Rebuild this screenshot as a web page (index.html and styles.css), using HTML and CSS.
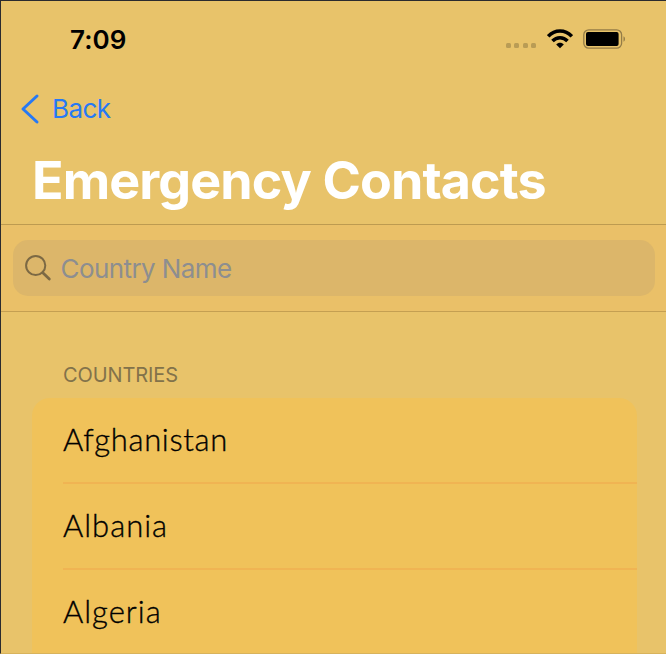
FILE: index.html
```html
<!DOCTYPE html>
<html lang="en">
<head>
<meta charset="utf-8">
<title>Emergency Contacts</title>
<link rel="stylesheet" href="styles.css">
</head>
<body>
<main class="screen">
  <header class="status">
    <span class="time">7:09</span>
    <div class="indicators">
      <div class="signal"><i></i><i></i><i></i><i></i></div>
      <svg class="wifi" width="26" height="20" viewBox="0 0 26 20" fill="none" stroke="#000" stroke-width="3.5">
        <path d="M1.2 7.3C7.8.2 18.200.2 24.800 7.300"/>
        <path d="M5.500 12C9.700 7.600 16.300 7.600 20.500 12"/>
        <path d="M13 19.200L9.200 15.400C11.200 13.300 14.800 13.300 16.800 15.400Z" fill="#000" stroke="none"/>
      </svg>
      <svg class="battery" width="43" height="20" viewBox="0 0 43 20">
        <rect x=".8" y=".8" width="37.800" height="18.400" rx="5" fill="none" stroke="#947c47" stroke-width="1.300"/>
        <rect x="3" y="3" width="32.600" height="14" rx="2"/>
        <path d="M40.500 7.300Q42 8 42 10T40.500 12.700Z" fill="#947c47"/>
      </svg>
    </div>
  </header>
  <nav class="nav">
    <svg width="20" height="32" viewBox="0 0 20 32" fill="none" stroke="#2679f5" stroke-width="3" stroke-linecap="round" stroke-linejoin="round"><path d="M17 3L3 16L17 29"/></svg>
    <span class="back">Back</span>
  </nav>
  <h1 class="title">Emergency Contacts</h1>
  <section class="searchbar">
    <div class="field">
      <svg width="28" height="28" viewBox="0 0 28 28" fill="none" stroke="#7c6944" stroke-width="2"><circle cx="11.700" cy="11.500" r="9.600"/><path d="M18.800 18.800L25.300 25" stroke-width="2.800" stroke-linecap="round"/></svg>
      <span class="placeholder">Country Name</span>
    </div>
  </section>
  <section class="list">
    <h2 class="label">COUNTRIES</h2>
    <ul class="card">
      <li>Afghanistan</li>
      <li class="wide">Albania</li>
      <li class="wide">Algeria</li>
    </ul>
  </section>
</main>
</body>
</html>
```
FILE: styles.css
```css
* { box-sizing: border-box; }
body { margin: 0; }
.screen {
  width: 666px;
  height: 654px;
  overflow: hidden;
  display: flex;
  flex-direction: column;
  background: #e8c36a;
  border-left: 1px solid #2b2b2e;
  border-top: 1px solid #2b2b2e;
  border-bottom: 1px solid #d8b35c;
  font-family: Inter, "Liberation Sans", sans-serif;
  white-space: nowrap;
}
.status {
  flex: none;
  height: 76px;
  padding: 0 40px 0 69px;
  display: flex;
  align-items: center;
  justify-content: space-between;
}
.time { font-size: 26px; font-weight: 600; letter-spacing: .1px; }
.indicators { display: flex; align-items: center; }
.signal { display: flex; gap: 3.500px; padding-top: 13px; margin-right: 11px; }
.signal i { width: 5px; height: 5px; border-radius: 1.500px; background: #b99c55; }
.battery { margin-left: 10px; }
.nav {
  flex: none;
  height: 64px;
  padding: 0 0 1px 19px;
  display: flex;
  align-items: center;
  color: #2679f5;
}
.back { margin-left: 12px; font-size: 26px; letter-spacing: -.6px; }
.title {
  flex: none;
  height: 84px;
  margin: 0;
  padding: 9px 0 0 31px;
  border-bottom: 1px solid #bd9b50;
  color: #fff;
  font-size: 52px;
  line-height: 62px;
  font-weight: 700;
  letter-spacing: -.9px;
}
.searchbar {
  flex: none;
  height: 87px;
  padding: 15px 11px 15px 12px;
  background: #eac068;
  border-bottom: 1px solid #c49f52;
}
.field {
  height: 56px;
  padding-left: 11px;
  border-radius: 15px;
  background: #dcb66a;
  display: flex;
  align-items: center;
}
.placeholder { margin-left: 8.500px; font-size: 26px; letter-spacing: -.58px; color: #8d8e90; }
.list { flex: 1; padding: 49px 29px 0 31px; }
.label {
  height: 37px;
  margin: 0;
  padding: 2px 0 0 31px;
  font-size: 20px;
  line-height: 24px;
  font-weight: 400;
  letter-spacing: -.1px;
  color: #82724a;
}
.card {
  list-style: none;
  margin: 0;
  padding: 0 0 0 31px;
  height: 260px;
  background: #f0c25a;
  border-radius: 18px 18px 0 0;
}
.card li {
  height: 86px;
  border-bottom: 2px solid #f0b453;
  font-family: Lato, "Liberation Sans", sans-serif;
  font-size: 31px;
  line-height: 83px;
  font-weight: 300;
  letter-spacing: .66px;
  -webkit-text-stroke: .35px #000;
  color: #000;
}
.card .wide { letter-spacing: 1px; }
.card li:last-child { border-bottom: 0; }
```
